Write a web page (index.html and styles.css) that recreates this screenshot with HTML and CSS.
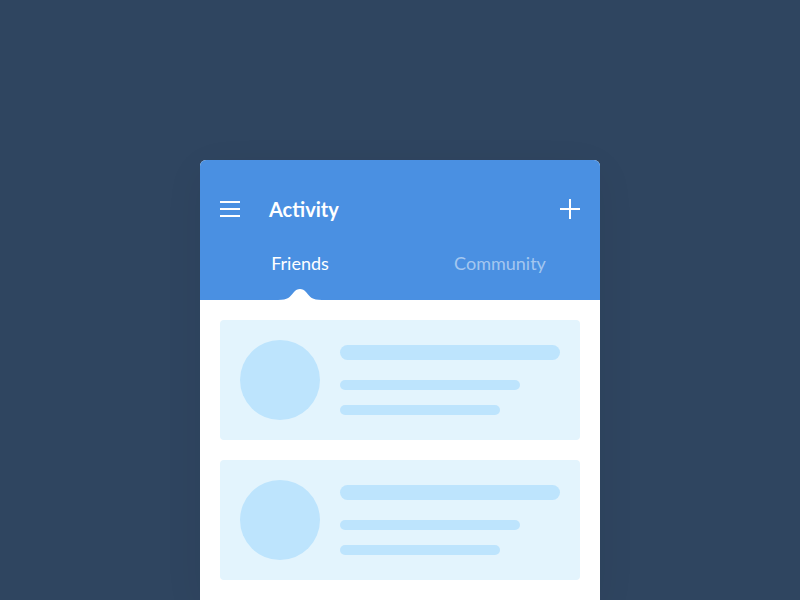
FILE: index.html
```html
<!DOCTYPE html>
<html>
<head>
<meta charset="utf-8">
<link rel="stylesheet" href="styles.css">
</head>
<body>
<div class="app">
  <header class="header">
    <div class="toolbar">
      <svg class="icon" width="20" height="20" viewBox="0 0 20 20"><rect x="0" y="2" width="20" height="2" fill="#fff"/><rect x="0" y="9" width="20" height="2" fill="#fff"/><rect x="0" y="16" width="20" height="2" fill="#fff"/></svg>
      <h1 class="title">Activity</h1>
      <svg class="icon plus" width="20" height="20" viewBox="0 0 20 20"><rect x="0" y="9" width="20" height="2" fill="#fff"/><rect x="9" y="0" width="2" height="20" fill="#fff"/></svg>
    </div>
    <nav class="tabs">
      <div class="tab active">Friends
        <svg class="bump" width="44" height="13" viewBox="0 0 44 13"><path d="M0 13 C10 13 12 10 16 5 C19 1 25 1 28 5 C32 10 34 13 44 13 Z" fill="#fff"/></svg>
      </div>
      <div class="tab">Community</div>
    </nav>
  </header>
  <main class="list">
    <div class="item">
      <div class="avatar"></div>
      <div class="lines">
        <div class="line l1"></div>
        <div class="line l2"></div>
        <div class="line l3"></div>
      </div>
    </div>
    <div class="item">
      <div class="avatar"></div>
      <div class="lines">
        <div class="line l1"></div>
        <div class="line l2"></div>
        <div class="line l3"></div>
      </div>
    </div>
  </main>
</div>
</body>
</html>
```
FILE: styles.css
```css
html, body {
  margin: 0;
  padding: 0;
}
body {
  width: 800px;
  height: 600px;
  overflow: hidden;
  background: #2f4560;
  font-family: Lato, "Open Sans", sans-serif;
}
.app {
  width: 400px;
  height: 440px;
  margin: 160px auto 0;
  border-radius: 6px 6px 0 0;
  overflow: hidden;
  background: #fff;
  box-shadow: 0 10px 40px rgba(0, 0, 0, 0.06);
}
.header {
  background: #4a90e2;
  color: #fff;
}
.toolbar {
  display: flex;
  align-items: center;
  height: 70px;
  padding: 14px 20px 0 20px;
}
.icon {
  display: block;
  flex: none;
}
.title {
  margin: 0 0 0 29px;
  font-size: 20px;
  font-weight: 700;
  flex: 1;
}
.tabs {
  display: grid;
  grid-template-columns: 1fr 1fr;
  height: 56px;
}
.tab {
  position: relative;
  text-align: center;
  font-size: 18px;
  line-height: 24px;
  padding-top: 7px;
  color: rgba(255, 255, 255, 0.5);
}
.tab.active {
  color: #fff;
}
.bump {
  position: absolute;
  left: 50%;
  bottom: 0;
  margin-left: -22px;
  display: block;
}
.list {
  display: flex;
  flex-direction: column;
  gap: 20px;
  padding: 20px;
}
.item {
  display: flex;
  gap: 20px;
  height: 120px;
  box-sizing: border-box;
  padding: 20px;
  background: #e3f4fd;
  border-radius: 4px;
}
.avatar {
  width: 80px;
  height: 80px;
  border-radius: 50%;
  background: #bde4fd;
  flex: none;
}
.lines {
  display: flex;
  flex-direction: column;
  padding-top: 5px;
}
.line {
  background: #bde4fd;
  border-radius: 8px;
  height: 10px;
}
.l1 { width: 220px; height: 15px; }
.l2 { width: 180px; margin-top: 20px; }
.l3 { width: 160px; margin-top: 15px; }
```
